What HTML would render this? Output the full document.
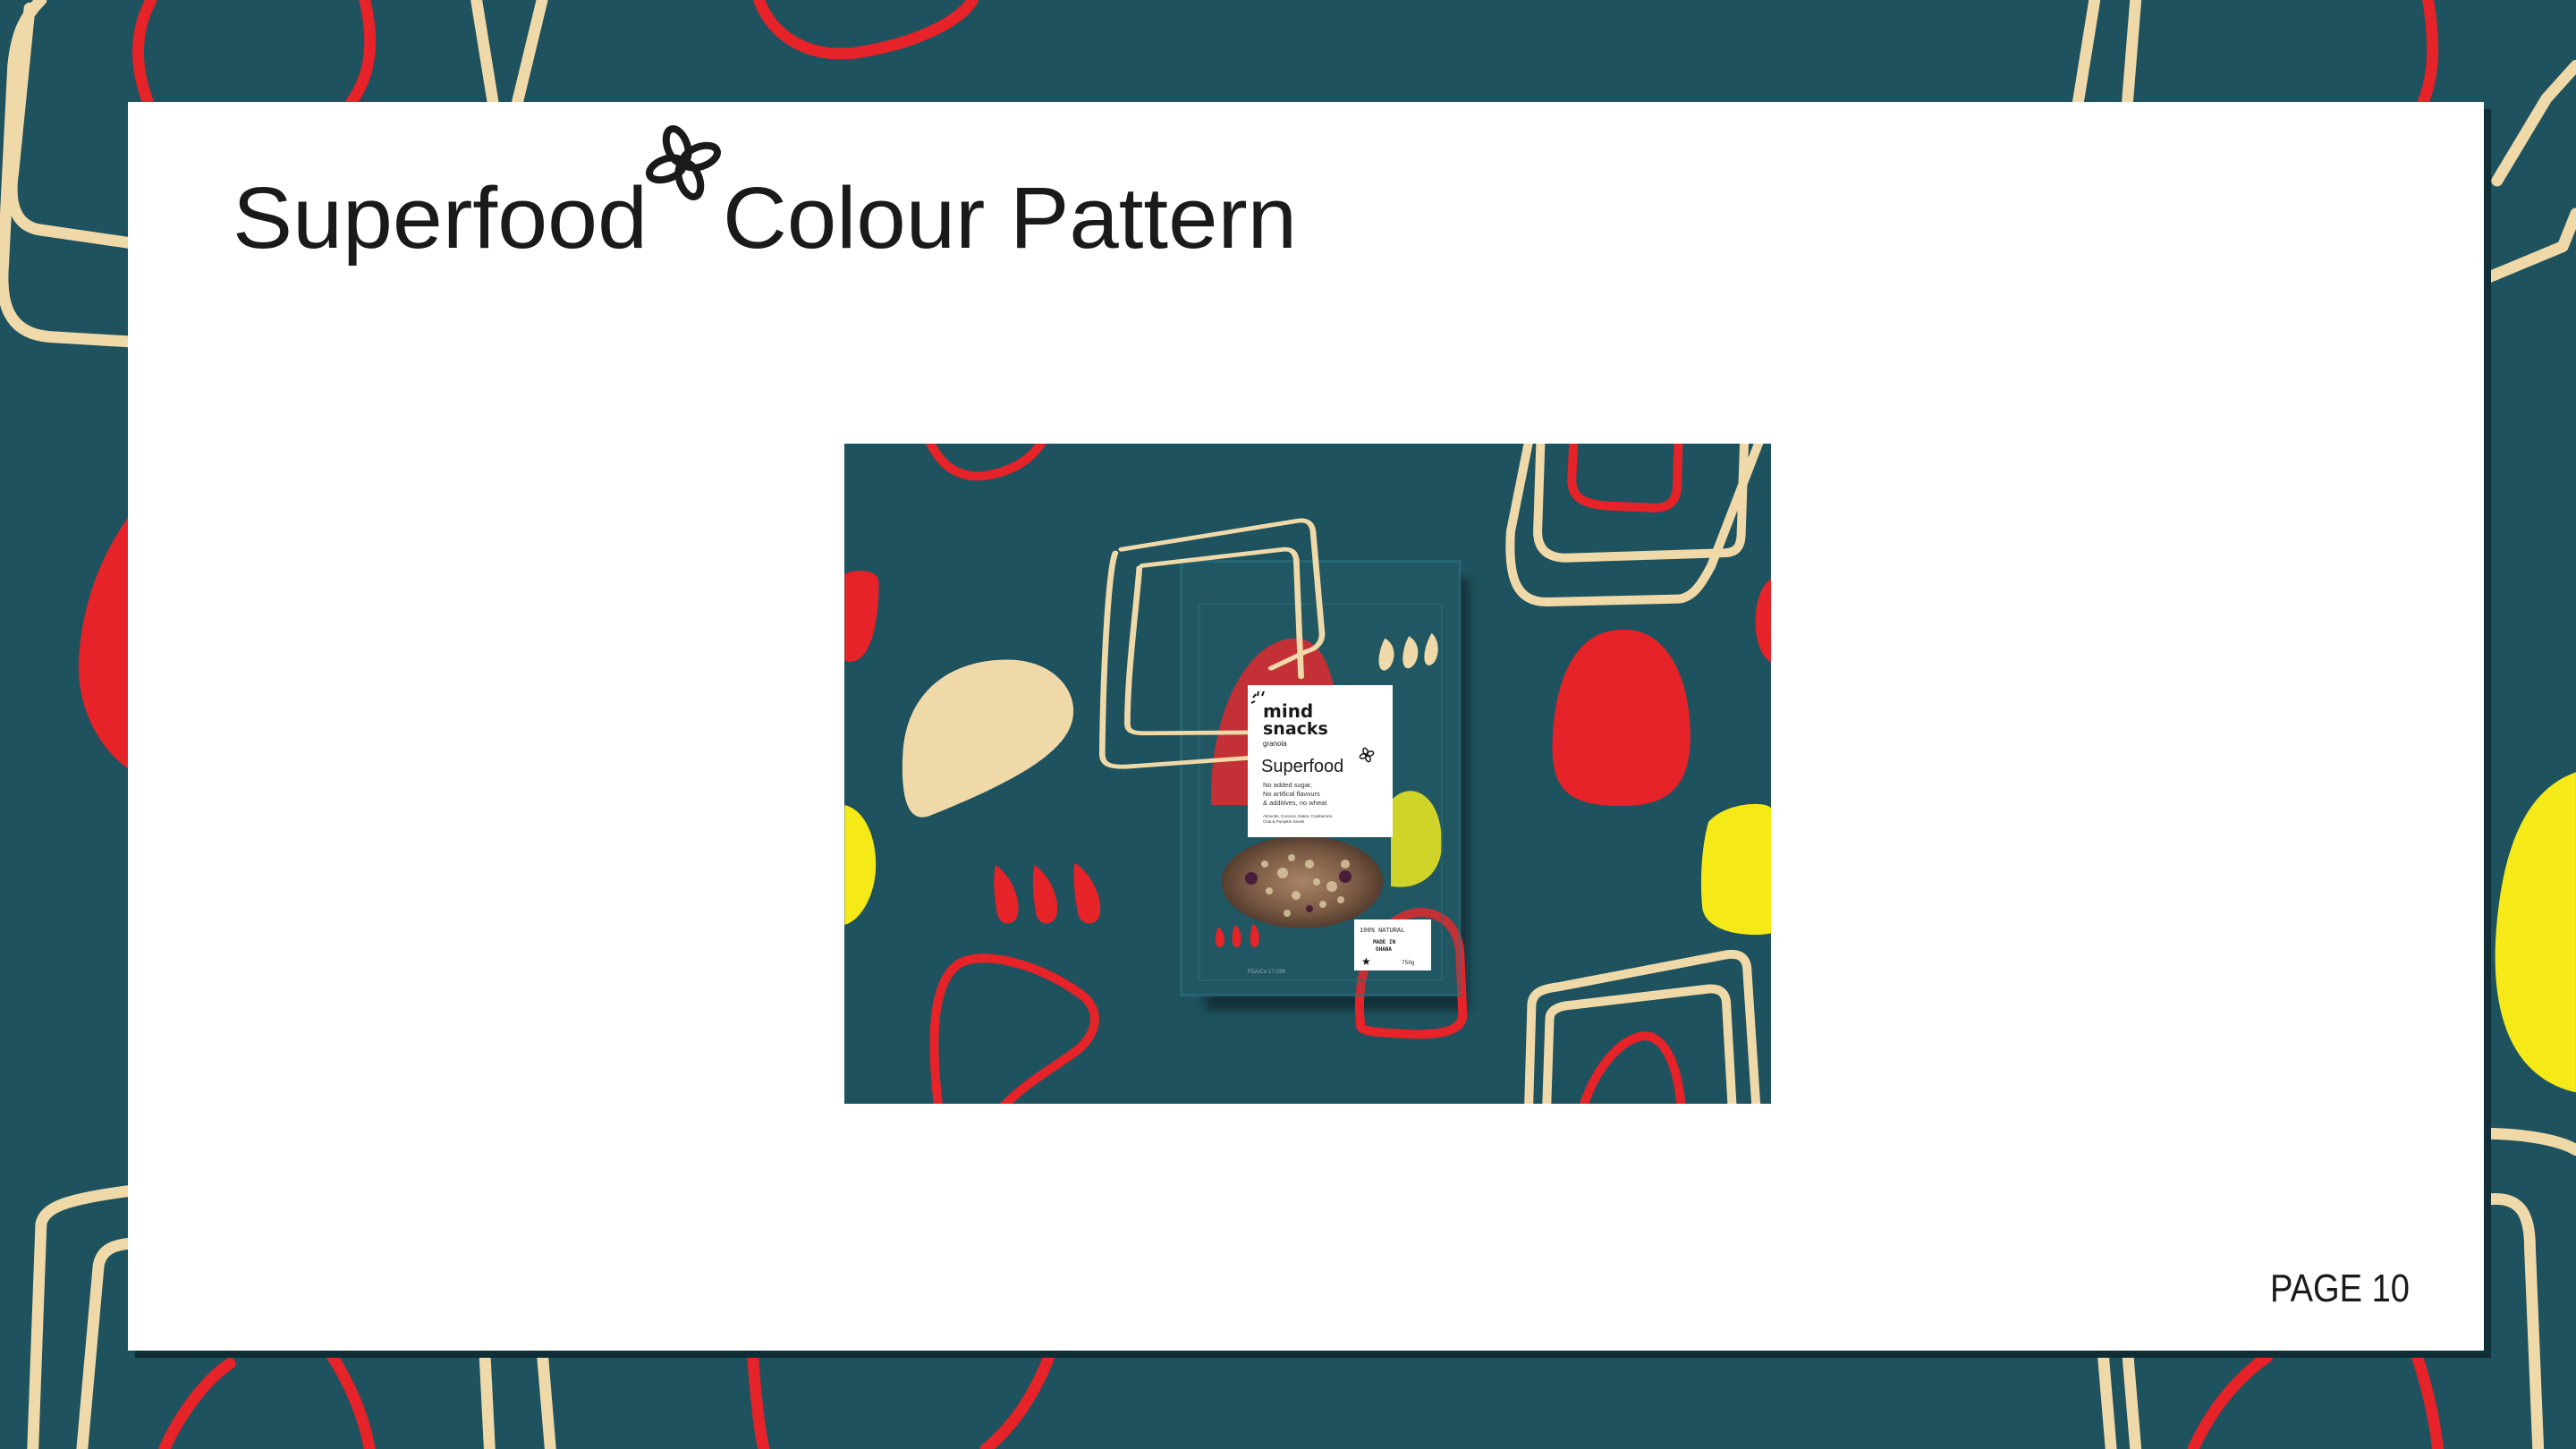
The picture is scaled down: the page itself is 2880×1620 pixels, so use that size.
<!DOCTYPE html>
<html><head><meta charset="utf-8"><style>
html,body{margin:0;padding:0;background:#1e525e;width:2880px;height:1620px;overflow:hidden}
svg{display:block}
</style></head><body>
<svg width="2880" height="1620" viewBox="0 0 2880 1620" xmlns="http://www.w3.org/2000/svg">
<rect width="2880" height="1620" fill="#1e525e"/>
<g transform="scale(1.8367)" fill="none" stroke-linecap="round" stroke-linejoin="round">
  <g stroke="#f0d9a8" stroke-width="7">
    <path d="M80,148 L25,140 C10,138 5,125 8,105 L18,5"/>
    <path d="M80,208 L30,205 C5,203 0,185 2,160 L8,40 C10,20 15,10 25,0"/>
    <path d="M290,0 L300,62 M330,0 L315,62"/>
    <path d="M1265,62 L1275,0 M1295,62 L1300,0"/>
    <path d="M1512,170 L1560,150 L1568,130 M1520,110 L1550,60 L1568,40"/>
    <path d="M20,882 L25,745 C27,735 40,730 78,725"/>
    <path d="M50,882 L60,770 C62,760 70,758 78,757"/>
    <path d="M295,822 L298,882 M330,822 L335,882"/>
    <path d="M1280,822 L1285,882 M1295,822 L1300,882"/>
    <path d="M1512,690 C1540,690 1560,695 1568,700 M1515,730 C1535,728 1540,740 1540,760 L1545,882"/>
  </g>
  <g stroke="#e52328" stroke-width="7">
    <path d="M90,62 C80,35 84,15 92,0 M222,0 C228,25 226,45 214,62"/>
    <path d="M462,0 C470,22 492,36 522,32 C560,26 585,12 592,0"/>
    <path d="M1478,0 C1482,25 1482,45 1475,62"/>
    <path d="M100,882 C110,860 125,840 140,830 M200,822 C215,845 222,865 225,882"/>
    <path d="M458,822 C460,850 462,870 465,882 M640,822 C630,850 615,870 600,882"/>
    <path d="M1335,882 C1345,860 1360,840 1380,826 M1470,822 C1478,845 1482,865 1484,882"/>
  </g>
  <path d="M78,315 C60,340 50,370 48,400 C46,430 60,455 78,468 Z" fill="#e52328"/>
  <path d="M1568,470 C1540,480 1525,510 1520,560 C1515,610 1525,655 1568,665 Z" fill="#f5ea17"/>
</g>
<rect x="151" y="122" width="2634" height="1396" fill="#0f2e35"/>
<rect x="143" y="114" width="2634" height="1396" fill="#ffffff"/>
<text x="260" y="277" font-family="Liberation Sans, sans-serif" font-size="97" fill="#1a1a1a" textLength="464" lengthAdjust="spacingAndGlyphs">Superfood</text>
<text x="808" y="277" font-family="Liberation Sans, sans-serif" font-size="97" fill="#1a1a1a" textLength="642" lengthAdjust="spacingAndGlyphs">Colour Pattern</text>
<g transform="translate(764,182) rotate(-20)" fill="none" stroke="#1a1a1a" stroke-width="8">
  <ellipse cx="0" cy="-20" rx="11" ry="20"/>
  <ellipse cx="0" cy="20" rx="11" ry="20"/>
  <ellipse cx="-20" cy="0" rx="20" ry="11"/>
  <ellipse cx="20" cy="0" rx="20" ry="11"/>
</g>
<text x="2538" y="1455" font-family="Liberation Sans, sans-serif" font-size="44" fill="#1a1a1a" textLength="156" lengthAdjust="spacingAndGlyphs">PAGE 10</text>

<svg x="944" y="496" width="1036" height="738" viewBox="0 0 1036 738">
<defs>
  <clipPath id="c"><rect width="1036" height="738"/></clipPath>
  <radialGradient id="g" cx="50%" cy="50%" r="55%">
    <stop offset="0" stop-color="#a88466"/><stop offset="0.6" stop-color="#7a5a44"/><stop offset="1" stop-color="#4a3428"/>
  </radialGradient>
  <filter id="sh" x="-20%" y="-20%" width="150%" height="150%"><feGaussianBlur stdDeviation="8"/></filter>
</defs>
<g clip-path="url(#c)">
<rect width="1036" height="738" fill="#1e525e"/>
<g transform="translate(-5,-7) scale(0.6696,0.478)" stroke-linejoin="round" stroke-linecap="round">
  <g fill="none">
    <path d="M150,10 C170,70 200,95 240,90 C290,80 320,50 338,10" stroke="#e52328" stroke-width="10" vector-effect="non-scaling-stroke"/>
    <path d="M165,1570 C150,1400 155,1270 200,1230 C240,1200 330,1230 400,1300 C440,1340 430,1400 390,1440 C350,1480 300,1520 270,1570" stroke="#e52328" stroke-width="10" vector-effect="non-scaling-stroke"/>
    <path d="M1225,10 L1222,100 C1222,140 1240,155 1280,160 L1360,165 C1390,165 1398,140 1398,110 L1400,10" stroke="#e52328" stroke-width="10" vector-effect="non-scaling-stroke"/>
    <path d="M1240,1570 C1260,1480 1300,1410 1340,1400 C1380,1395 1400,1480 1405,1570" stroke="#e52328" stroke-width="10" vector-effect="non-scaling-stroke"/>
    <path d="M1150,10 L1120,220 C1115,330 1130,385 1180,385 L1400,378 C1425,375 1440,340 1455,300 L1535,10" stroke="#f0d9a8" stroke-width="10" vector-effect="non-scaling-stroke"/>
    <path d="M1170,10 L1165,220 C1165,260 1180,280 1210,282 L1480,270 C1500,268 1505,250 1505,220 L1510,10" stroke="#f0d9a8" stroke-width="10" vector-effect="non-scaling-stroke"/>
    <path d="M1150,1570 L1155,1330 C1155,1300 1170,1290 1200,1285 L1480,1210 C1505,1205 1515,1220 1515,1250 L1530,1570" stroke="#f0d9a8" stroke-width="10" vector-effect="non-scaling-stroke"/>
    <path d="M1180,1570 L1185,1360 C1185,1340 1200,1330 1220,1328 L1450,1290 C1470,1288 1478,1300 1480,1320 L1490,1570" stroke="#f0d9a8" stroke-width="10" vector-effect="non-scaling-stroke"/>
  </g>
  <path d="M8,320 C30,305 65,310 65,340 C65,420 55,500 30,520 C20,528 8,525 8,520 Z" fill="#e52328"/>
  <path d="M1555,330 C1535,350 1525,400 1530,460 C1535,500 1545,520 1555,525 Z" fill="#e52328"/>
  <path d="M105,740 C110,600 180,520 280,520 C350,520 390,580 390,640 C390,720 320,790 150,885 C125,898 100,880 105,740Z" fill="#f0d9a8"/>
  <path d="M8,860 C40,870 60,930 60,1000 C60,1070 35,1130 8,1140Z" fill="#f5ea17"/>
  <path d="M260,1000 C290,1030 305,1090 295,1125 C285,1145 265,1140 262,1110 C258,1080 255,1030 260,1000Z" fill="#e52328"/>
  <path d="M325,1000 C355,1030 370,1090 360,1125 C350,1145 330,1140 327,1110 C323,1080 320,1030 325,1000Z" fill="#e52328"/>
  <path d="M392,995 C425,1025 442,1090 432,1125 C422,1145 400,1140 397,1110 C393,1080 388,1030 392,995Z" fill="#e52328"/>
  <path d="M1300,450 C1380,440 1420,560 1420,700 C1420,820 1380,865 1300,862 C1220,860 1185,830 1190,700 C1195,560 1230,455 1300,450Z" fill="#e52328"/>
  <path d="M1450,900 C1480,850 1555,850 1555,870 L1555,1160 C1520,1170 1445,1160 1440,1100 C1435,1030 1440,950 1450,900Z" fill="#f5ea17"/>
  <rect x="610" y="330" width="440" height="1010" fill="#0a1e22" opacity="0.6" filter="url(#sh)"/>
  <rect x="570" y="290" width="465" height="1015" fill="#1e525e"/>
  <path d="M620,860 C615,650 680,470 760,470 C820,470 840,600 835,860Z" fill="#e52328"/>
  <path d="M920,850 C950,800 1005,830 1005,950 C1005,1030 960,1060 920,1050Z" fill="#f5ea17"/>
  <path d="M870,1380 C860,1280 880,1150 950,1115 C990,1100 1030,1130 1035,1200 L1040,1350 C1040,1390 1000,1400 940,1395 C900,1392 875,1390 870,1380Z" fill="none" stroke="#e52328" stroke-width="10" vector-effect="non-scaling-stroke"/>
  <rect x="570" y="290" width="465" height="1015" fill="#2a6e7a" opacity="0.18"/>
  <rect x="570" y="290" width="465" height="1015" fill="none" stroke="#2d7280" stroke-width="3" vector-effect="non-scaling-stroke" opacity="0.6"/>
  <rect x="600" y="390" width="405" height="880" fill="none" stroke="#2b6a76" stroke-width="2" vector-effect="non-scaling-stroke" opacity="0.6"/>
  <g fill="none" stroke="#f0d9a8" stroke-width="10" vector-effect="non-scaling-stroke">
    <path d="M470,262 L765,195 C780,192 788,200 790,220 L805,460 C805,480 795,495 780,500 L720,540 M460,270 C450,300 440,500 438,740 C438,765 450,772 480,770 L700,748"/>
    <path d="M505,300 L740,262 C755,260 760,270 762,285 L770,560 M500,305 C495,400 480,550 480,670 C480,688 490,692 510,692 L690,690"/>
  </g>
  <path d="M910,470 C935,490 925,540 910,545 C895,548 898,500 910,470Z" fill="#f0d9a8"/>
  <path d="M950,465 C975,485 965,535 950,540 C935,543 938,495 950,465Z" fill="#f0d9a8"/>
  <path d="M988,458 C1005,478 1000,528 985,533 C970,536 975,488 988,458Z" fill="#f0d9a8"/>
  <path d="M632,1145 C645,1160 645,1190 635,1193 C625,1195 625,1165 632,1145Z" fill="#e52328"/>
  <path d="M660,1140 C673,1155 673,1190 663,1193 C653,1195 653,1160 660,1140Z" fill="#e52328"/>
  <path d="M690,1137 C703,1152 703,1190 693,1193 C683,1195 683,1160 690,1137Z" fill="#e52328"/>
  <ellipse cx="772" cy="1040" rx="135" ry="108" fill="url(#g)"/>
</g>
<g fill="#d8c4a0" opacity="0.85">
  <circle cx="490" cy="480" r="6"/><circle cx="520" cy="470" r="5"/><circle cx="545" cy="495" r="6"/><circle cx="505" cy="505" r="5"/><circle cx="475" cy="500" r="4"/><circle cx="535" cy="515" r="4"/>
  <circle cx="470" cy="470" r="4"/><circle cx="500" cy="463" r="4"/><circle cx="560" cy="470" r="5"/><circle cx="495" cy="525" r="4"/><circle cx="555" cy="510" r="4"/><circle cx="528" cy="490" r="4"/>
</g>
<g fill="#4a1e3a"><circle cx="455" cy="486" r="7"/><circle cx="560" cy="484" r="7"/><circle cx="520" cy="520" r="4"/></g>
<rect x="451" y="270" width="162" height="170" fill="#ffffff"/>
<text x="468" y="306" font-family="DejaVu Sans, sans-serif" font-weight="bold" font-size="20" fill="#1a1a1a">mind</text>
<text x="468" y="325" font-family="DejaVu Sans, sans-serif" font-weight="bold" font-size="19" fill="#1a1a1a">snacks</text>
<path d="M455,290 l4,-2 M457,284 l3,-4 M462,282 l1,-5 M467,282 l2,-5" stroke="#1a1a1a" stroke-width="2"/>
<text x="468" y="338" font-family="Liberation Sans, sans-serif" font-size="8" fill="#1a1a1a">granola</text>
<text x="466" y="367" font-family="Liberation Sans, sans-serif" font-size="20" fill="#1a1a1a">Superfood</text>
<g transform="translate(584,348) rotate(-20)" fill="none" stroke="#1a1a1a" stroke-width="1.5"><ellipse cx="0" cy="-4" rx="2.5" ry="4"/><ellipse cx="0" cy="4" rx="2.5" ry="4"/><ellipse cx="-4" cy="0" rx="4" ry="2.5"/><ellipse cx="4" cy="0" rx="4" ry="2.5"/></g>
<text font-family="Liberation Sans, sans-serif" font-size="7.5" fill="#333"><tspan x="468" y="384">No added sugar,</tspan><tspan x="468" y="394">No artifical flavours</tspan><tspan x="468" y="404">&amp; additives, no wheat</tspan></text>
<text font-family="Liberation Sans, sans-serif" font-size="4.5" fill="#333"><tspan x="468" y="418">Almonds, Coconut, Dates, Cranberries,</tspan><tspan x="468" y="424">Chia &amp; Pumpkin Seeds</tspan></text>
<rect x="570" y="532" width="86" height="57" fill="#ffffff"/>
<text x="576" y="546" font-family="Liberation Mono, monospace" font-size="7" fill="#222">100% NATURAL</text>
<text x="591" y="559" font-family="Liberation Mono, monospace" font-size="6" font-weight="bold" fill="#222">MADE IN</text>
<text x="594" y="567" font-family="Liberation Mono, monospace" font-size="6" font-weight="bold" fill="#222">GHANA</text>
<text x="623" y="582" font-family="Liberation Mono, monospace" font-size="6" fill="#222">750g</text>
<text x="578" y="583" font-family="DejaVu Sans, sans-serif" font-size="12" fill="#111">★</text>
<text x="451" y="592" font-family="Liberation Sans, sans-serif" font-size="6" fill="#9ab">FDA/Ce 17-038</text>
</svg>
</svg>
</body></html>
